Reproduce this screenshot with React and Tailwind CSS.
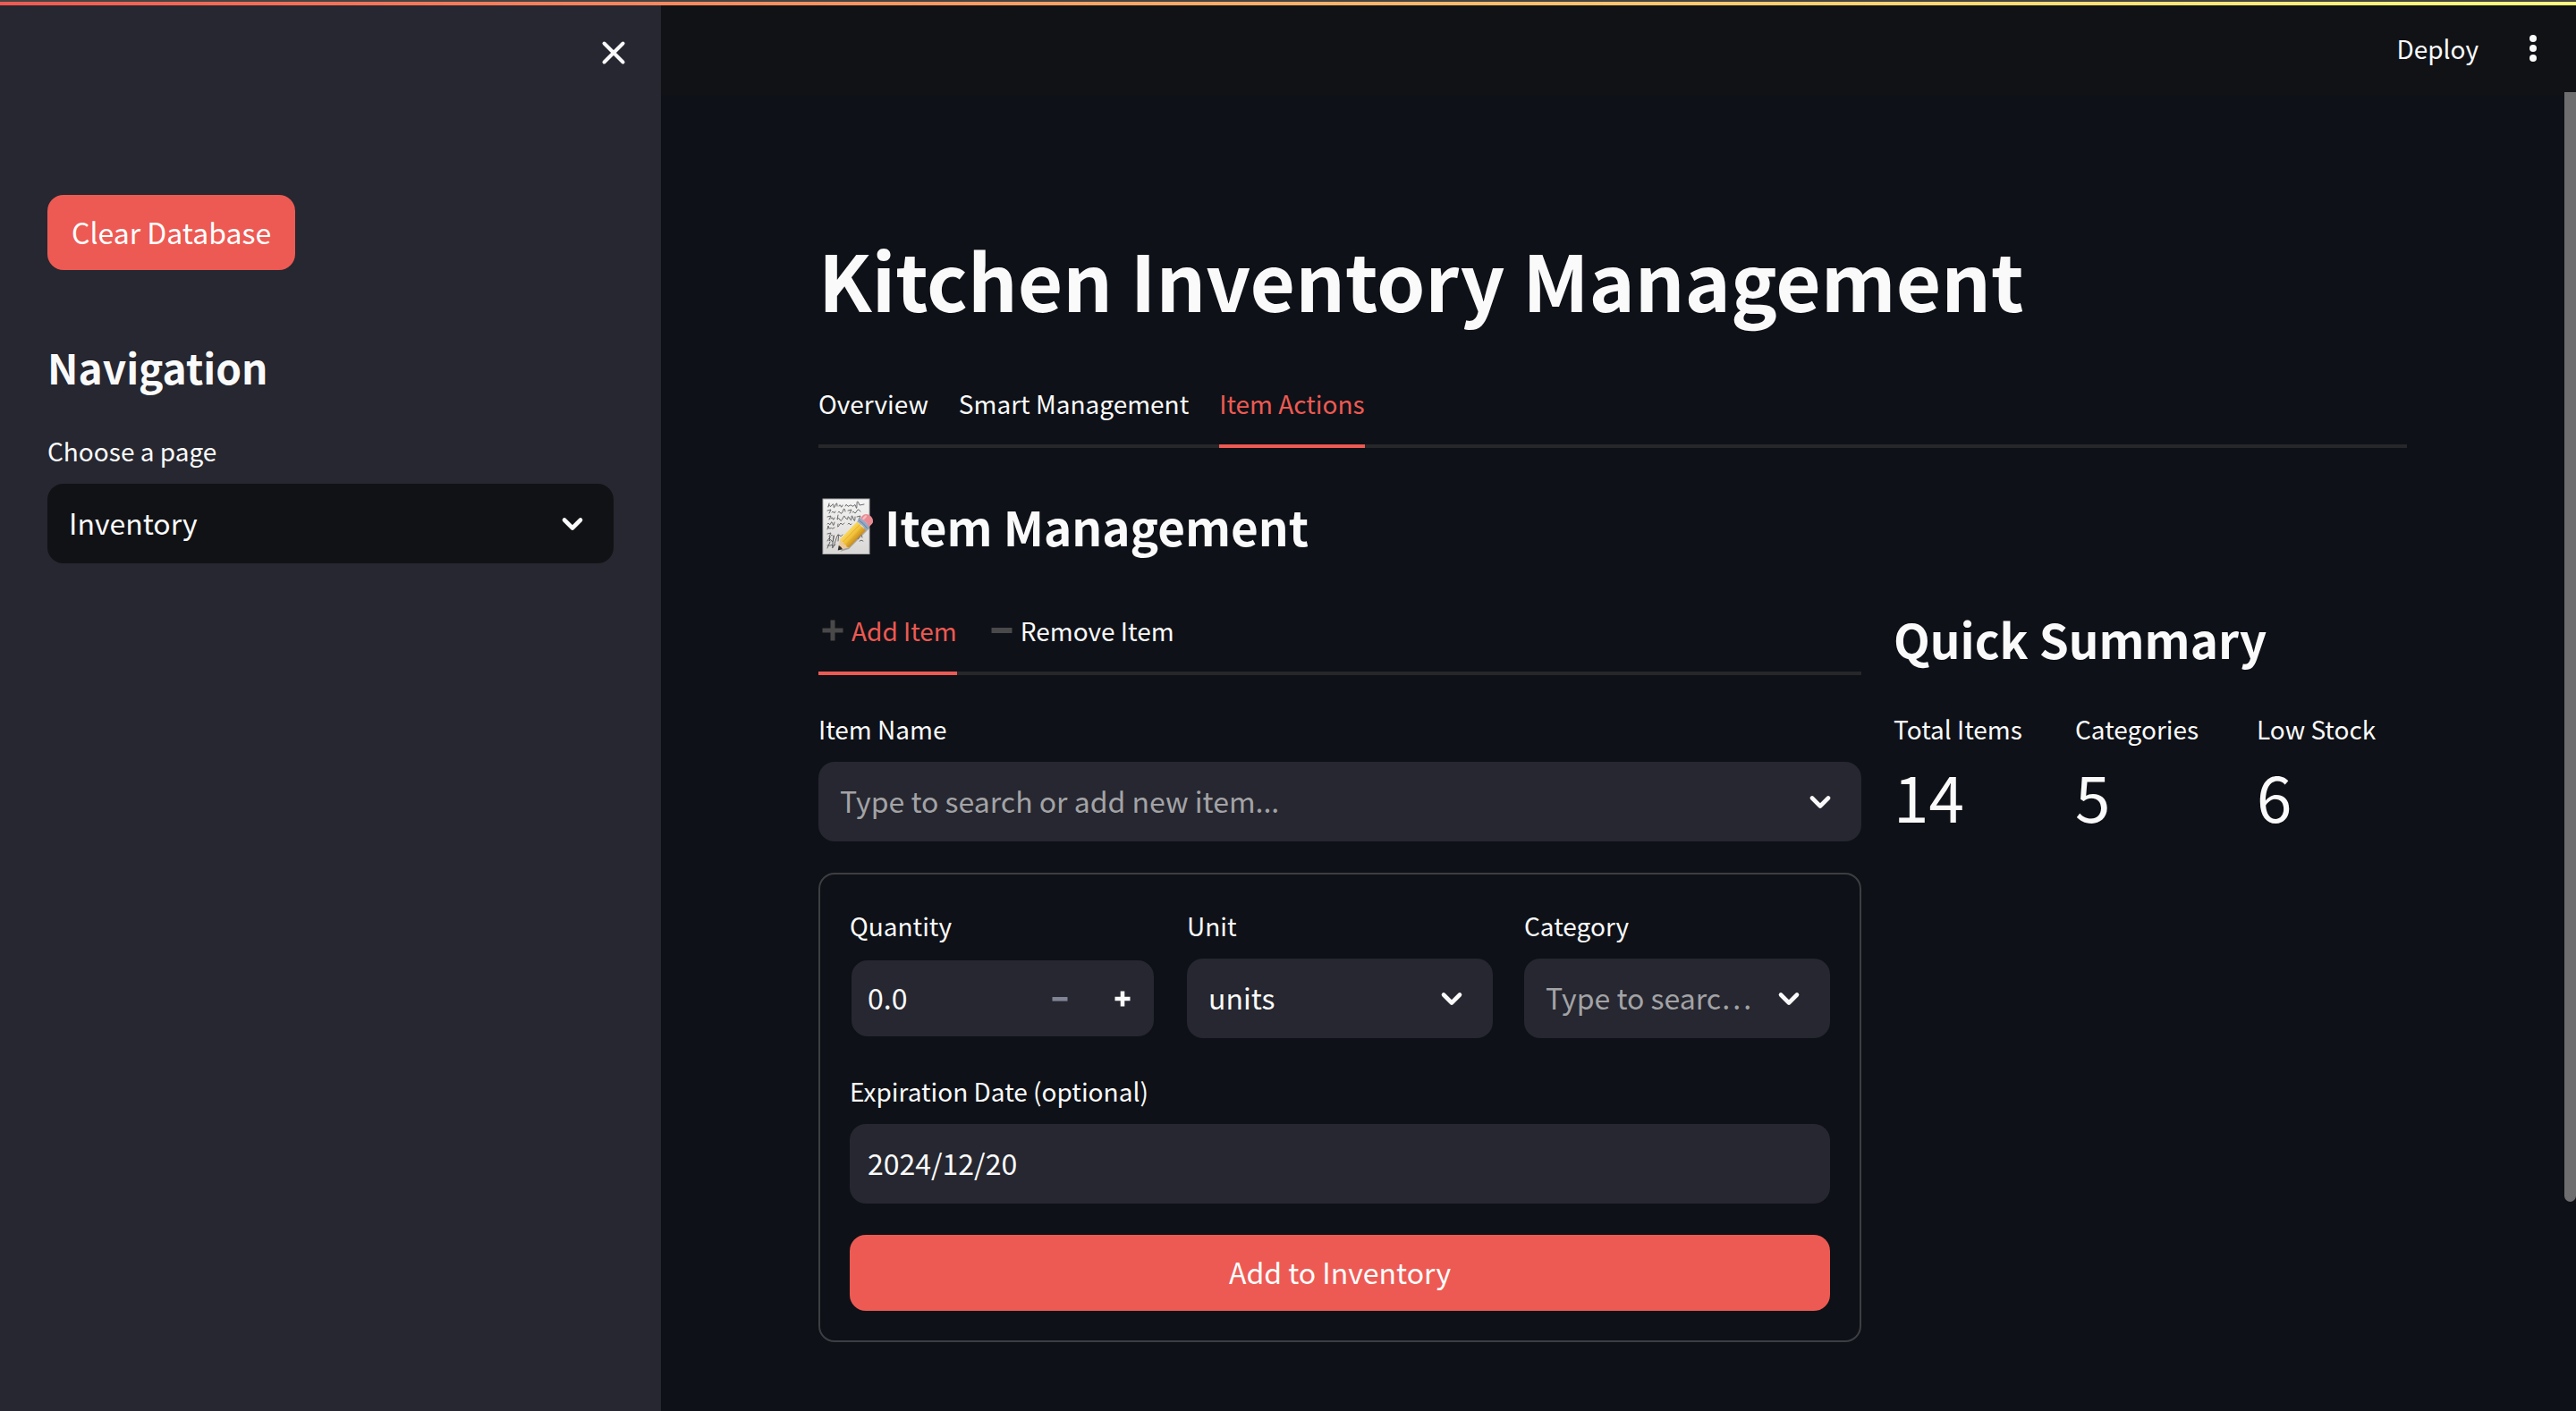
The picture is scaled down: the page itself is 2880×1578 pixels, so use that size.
import { useState } from "react";

const FONT = "font-['Noto_Sans_CJK_KR',sans-serif]";

function Chevron() {
  return (
    <svg
      className="pointer-events-none absolute right-8 top-1/2 h-4 w-7 -translate-y-1/2"
      viewBox="0 0 28 16"
      fill="none"
      stroke="#fafafa"
      strokeWidth="4.6"
      strokeLinecap="round"
      strokeLinejoin="round"
      aria-hidden="true"
    >
      <path d="M5 3.5 L14 12.5 L23 3.5" />
    </svg>
  );
}

function Field({ id, label, children }) {
  return (
    <div className="min-w-0">
      <label htmlFor={id} className="mb-[13px] block text-[28px] leading-[48px]">
        {label}
      </label>
      {children}
    </div>
  );
}

function Select({ id, options, placeholder, dark }) {
  const [value, setValue] = useState(placeholder ? "" : options[0]);
  return (
    <div className="relative">
      <select
        id={id}
        value={value}
        onChange={(e) => setValue(e.target.value)}
        className={
          "block h-[89px] w-full appearance-none truncate rounded-[18px] pb-[3px] pl-6 pr-21 text-[32px] outline-none [font-feature-settings:'pwid'] " +
          (dark ? "bg-[#111216] " : "bg-[#262730] ") +
          (value === "" ? "text-[#a3a3a6]" : "text-[#fafafa]")
        }
      >
        {placeholder && <option value="">{placeholder}</option>}
        {options.map((o) => (
          <option key={o}>{o}</option>
        ))}
      </select>
      <Chevron />
    </div>
  );
}

function Tabs({ items, label }) {
  const [active, setActive] = useState(items.findIndex((i) => i.active));
  return (
    <div role="tablist" aria-label={label} className="flex h-22 gap-[34px] shadow-[inset_0_-4px_0_#262729]">
      {items.map((item, i) => (
        <button
          key={item.label}
          type="button"
          role="tab"
          aria-selected={i === active}
          onClick={() => setActive(i)}
          className={
            "flex items-center border-b-4 pb-2 text-[28px] whitespace-nowrap " +
            (i === active ? "border-[#ed5a53] text-[#ed5a53]" : "border-transparent")
          }
        >
          {item.icon}
          {item.label}
        </button>
      ))}
    </div>
  );
}

function HeavyPlus() {
  return (
    <svg className="ml-1 mr-[9px] size-6" viewBox="0 0 24 24" fill="#494949" aria-hidden="true">
      <path d="M9.5 0.5h5v9h9v5h-9v9h-5v-9h-9v-5h9z" />
    </svg>
  );
}

function HeavyMinus() {
  return (
    <svg className="ml-1 mr-[9px] size-6" viewBox="0 0 24 24" fill="#494949" aria-hidden="true">
      <path d="M0.5 9h23v6h-23z" />
    </svg>
  );
}

function Memo() {
  return (
    <svg className="ml-1 h-16 w-[58px] shrink-0 overflow-visible" viewBox="0 0 58 64" aria-hidden="true">
      <defs>
        <linearGradient id="paper" x1="0" y1="0" x2="0" y2="1">
          <stop offset="0" stopColor="#f4f4f4" />
          <stop offset="1" stopColor="#d9d7d5" />
        </linearGradient>
        <linearGradient id="wood" x1="0" y1="0" x2="0" y2="1">
          <stop offset="0" stopColor="#f9d85c" />
          <stop offset="0.5" stopColor="#f2c13a" />
          <stop offset="1" stopColor="#c98d1c" />
        </linearGradient>
      </defs>
      <rect x="1" y="2" width="52" height="61.5" fill="url(#paper)" stroke="#a9a9a9" strokeWidth="1" />
      <g fill="none" stroke="#5c5c5c" strokeWidth="0.9" strokeLinecap="round">
        <path d="M7 11l1-4M7 10q2-2 2 0t2-1 2 1 2-1 2 1M19 10q1-3 2 0t2-1M26 10q1-3 2-1t2 1 2-1 2 1 2-1 2 2 1-3 3 1l5-1" />
        <path d="M6 15l4-1-2 4M11 17q1-2 2 0t2-1M18 17q1-2 2 0t2 1 2-4 2 2M29 15l4-1-2 4M34 17q1-2 2 0t2 0 2-3 3 2" />
        <path d="M6 22l4-1-2 4M10 24q1-3 2 0t2-1M18 20l-1 5q2-3 3 0t3-1 2-3 2 3 2-1 2 1 2-1 2 1 2-2M39 22l4-1-2 4" />
        <path d="M6 30q1-2 2 0t2-1 2 1 2-2M18 30q-1 4 0 3t2-3 2 0 3-1M29 30q1-2 2 0t2 0" />
        <path d="M6 36l1-4q0 4 2 3t2 0 3-1" />
        <path d="M6 41l4-1-2 4M10 43q1-2 2 0M18 43q1-2 2 0t3-1" />
        <path d="M6 49q2-4 2-2l1-3-1 5q2-3 3 0t2-4-1 6 3-2 3 0" />
        <path d="M6 57l3-7M6 54h4q1-2 2 0t3-1" />
        <path d="M36 45q2-3 3 0t3-1 3 1M42 49q2-2 4 0" />
      </g>
      <path d="M20 61l10-3L57 31l-3-3z" fill="#000" opacity="0.25" />
      <g transform="translate(17.7 59.5) rotate(-46)">
        <path d="M0 0 L11 -6.8 V6.8 Z" fill="#ecc99a" />
        <path d="M0 0 L4.6 -3 Q5.6 0 4.6 3 Z" fill="#2b2b2b" />
        <path d="M11 -6.8 H38 V6.8 H11 Q8.5 4 11 2.4 Q8.5 0 11 -2.4 Q8.5 -4 11 -6.8Z" fill="url(#wood)" />
        <path d="M11 -2.4 H38 M11 2.4 H38" stroke="#dba62c" strokeWidth="0.7" />
        <path d="M38 -7 H43.5 Q45 0 43.5 7 H38 Q39.5 0 38 -7Z" fill="#93a9c4" />
        <path d="M40.5 -7Q42 0 40.5 7" fill="none" stroke="#64809f" strokeWidth="0.9" />
        <path d="M43.5 -7 H48 Q53 -6 53 0 T48 7 H43.5 Q45 0 43.5 -7Z" fill="#e98b93" />
        <path d="M45.5 -4 H49" stroke="#f7bcc0" strokeWidth="2.4" strokeLinecap="round" />
      </g>
    </svg>
  );
}

function Metric({ label, value }) {
  return (
    <div>
      <dt className="text-[28px] leading-[48px] whitespace-nowrap">{label}</dt>
      <dd className="text-[71px] leading-[100px]">{value}</dd>
    </div>
  );
}

function Sidebar() {
  return (
    <aside className="flex w-[739px] shrink-0 flex-col bg-[#262730] px-[53px]">
      <div className="flex h-[106px] items-center justify-end">
        <button type="button" aria-label="Close sidebar" className="-mr-3.5">
          <svg
            className="size-7"
            viewBox="0 0 28 28"
            fill="none"
            stroke="#fafafa"
            strokeWidth="4"
            strokeLinecap="round"
            aria-hidden="true"
          >
            <path d="M3.5 3.5 L24.5 24.5 M24.5 3.5 L3.5 24.5" />
          </svg>
        </button>
      </div>
      <button
        type="button"
        className="mt-[106px] h-[84px] self-start rounded-[18px] bg-[#ed5a53] px-[27px] pb-[3px] text-[32px] text-white"
      >
        Clear Database
      </button>
      <h2 className="mt-[76px] mb-[38px] text-[46px] leading-[64px] font-bold">Navigation</h2>
      <Field id="page" label="Choose a page">
        <Select id="page" options={["Inventory"]} dark />
      </Field>
    </aside>
  );
}

function ItemForm() {
  const [qty, setQty] = useState(0);
  return (
    <form
      onSubmit={(e) => e.preventDefault()}
      className="mt-[35px] flex flex-col gap-[35px] rounded-[18px] border-2 border-[#3d3e42] p-[33px]"
    >
      <div className="grid grid-cols-3 gap-[35px]">
        <Field id="quantity" label="Quantity">
          <div className="flex h-[89px] items-center rounded-[20px] border-2 border-[#0e1117] bg-[#262730]">
            <input
              id="quantity"
              type="text"
              inputMode="decimal"
              value={qty.toFixed(1)}
              onChange={(e) => setQty(Number(e.target.value) || 0)}
              className="h-full min-w-0 flex-1 bg-transparent pb-[3px] pl-[18px] text-[32px] outline-none"
            />
            <button
              type="button"
              aria-label="Decrease quantity"
              onClick={() => setQty(Math.max(0, qty - 1))}
              className="flex h-full w-[70px] items-center justify-center"
            >
              <svg className="h-5 w-5" viewBox="0 0 20 20" fill="#808495" aria-hidden="true">
                <path d="M1.5 8h17v4.6h-17z" />
              </svg>
            </button>
            <button
              type="button"
              aria-label="Increase quantity"
              onClick={() => setQty(qty + 1)}
              className="flex h-full w-[70px] items-center justify-center"
            >
              <svg className="h-5 w-5" viewBox="0 0 20 20" fill="#fafafa" aria-hidden="true">
                <path d="M7.7 1.5h4.6v6.2h6.2v4.6h-6.2v6.2H7.7v-6.2H1.5V7.7h6.2z" />
              </svg>
            </button>
          </div>
        </Field>
        <Field id="unit" label="Unit">
          <Select id="unit" options={["units"]} />
        </Field>
        <Field id="category" label="Category">
          <Select id="category" placeholder="Type to search or add new category..." options={[]} />
        </Field>
      </div>
      <Field id="expiry" label="Expiration Date (optional)">
        <input
          id="expiry"
          type="text"
          defaultValue="2024/12/20"
          className="block h-[89px] w-full rounded-[18px] bg-[#262730] px-5 pb-[3px] text-[32px] outline-none"
        />
      </Field>
      <button type="submit" className="h-[85px] rounded-[18px] bg-[#ed5a53] pb-[3px] text-[32px] text-white">
        Add to Inventory
      </button>
    </form>
  );
}

export default function App() {
  return (
    <div lang="en" className={"flex min-h-screen flex-col bg-[#0e1117] text-[#fafafa] " + FONT}>
      <div className="h-1.5 border-t-2 border-[#444444] bg-linear-to-r from-[#ed5a53] to-[#fffd80]" />
      <div className="flex flex-1">
        <Sidebar />
        <div className="flex min-w-0 flex-1 flex-col">
          <header className="flex h-[100px] items-center justify-end gap-[51px] bg-[#111216] pr-[38px] pb-1">
            <button type="button" className="text-[28px]">
              Deploy
            </button>
            <button type="button" aria-label="Menu">
              <svg className="h-8 w-5" viewBox="0 0 20 32" fill="#fafafa" aria-hidden="true">
                <circle cx="10" cy="5" r="4" />
                <circle cx="10" cy="16" r="4" />
                <circle cx="10" cy="27" r="4" />
              </svg>
            </button>
          </header>
          <div className="relative flex-1">
            <div className="absolute -top-[3px] right-0 h-[84.3%] w-[13px] rounded-b-full bg-[#6e6e70]" />
            <main className="pt-[147px] pr-[189px] pb-16 pl-44">
              <h1 className="text-[87px] leading-[116px] font-bold">Kitchen Inventory Management</h1>
              <div className="mt-11">
                <Tabs
                  label="Sections"
                  items={[
                    { label: "Overview" },
                    { label: "Smart Management" },
                    { label: "Item Actions", active: true },
                  ]}
                />
              </div>
              <h2 className="mt-[50px] flex items-center gap-3 text-[53px] leading-[74px] font-bold">
                <Memo />
                Item Management
              </h2>
              <div className="mt-[42px] grid grid-cols-[1166fr_574fr] gap-9">
                <div className="min-w-0">
                  <Tabs
                    label="Item actions"
                    items={[
                      { label: "Add Item", icon: <HeavyPlus />, active: true },
                      { label: "Remove Item", icon: <HeavyMinus /> },
                    ]}
                  />
                  <div className="mt-9">
                    <Field id="item" label="Item Name">
                      <Select id="item" placeholder="Type to search or add new item..." options={[]} />
                    </Field>
                  </div>
                  <ItemForm />
                </div>
                <section className="min-w-0 pt-2.5">
                  <h2 className="text-[53px] leading-[74px] font-bold">Quick Summary</h2>
                  <dl className="mt-10 grid grid-cols-3 gap-[35px]">
                    <Metric label="Total Items" value="14" />
                    <Metric label="Categories" value="5" />
                    <Metric label="Low Stock" value="6" />
                  </dl>
                </section>
              </div>
            </main>
          </div>
        </div>
      </div>
    </div>
  );
}
